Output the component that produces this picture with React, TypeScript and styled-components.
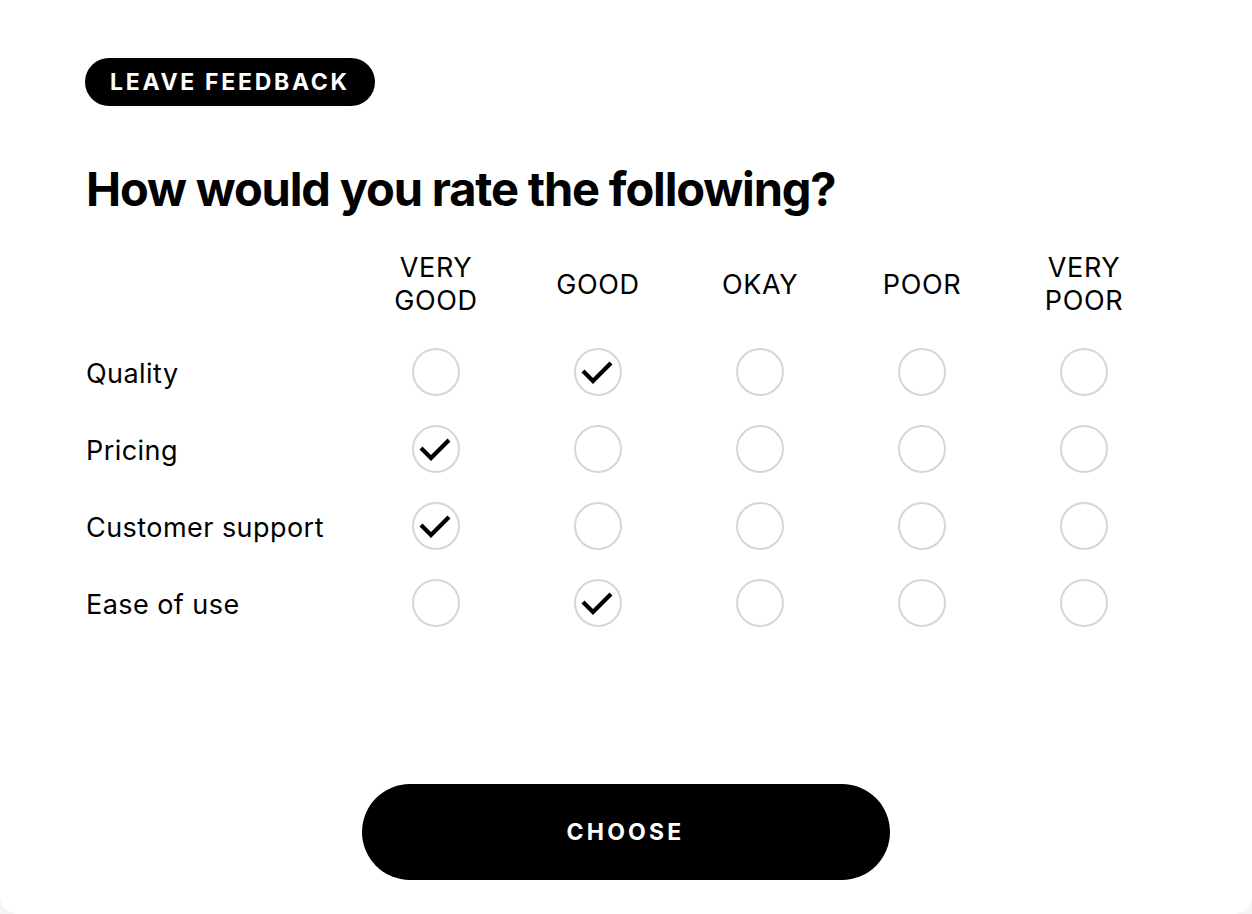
import React from "react";
import styled, { createGlobalStyle } from "styled-components";

const GlobalStyle = createGlobalStyle`
  html, body {
    margin: 0;
    padding: 0;
    background: #f4f4f4;
  }
  body {
    font-family: Inter, "Noto Sans", "Liberation Sans", sans-serif;
    color: #000;
  }
`;

const Card = styled.div`
  box-sizing: border-box;
  width: 1252px;
  height: 914px;
  background: #fff;
  border-radius: 0 0 18px 18px;
  padding: 58px 86px 0 85px;
  display: flex;
  flex-direction: column;
`;

const Badge = styled.div`
  align-self: flex-start;
  height: 48px;
  padding: 0 25px 0 25px;
  border-radius: 24px;
  background: #000;
  color: #fff;
  font-size: 23px;
  font-weight: 700;
  letter-spacing: 2.7px;
  display: flex;
  align-items: center;
`;

const Title = styled.h1`
  margin: 54px 0 0 1px;
  font-size: 47px;
  font-weight: 700;
  letter-spacing: -1.15px;
  line-height: 58px;
`;

const Grid = styled.div`
  margin-top: 33px;
  margin-left: 1px;
  display: grid;
  grid-template-columns: 269px repeat(5, 162px);
  grid-template-rows: 84px;
  grid-auto-rows: 77px;
`;

const HeadCell = styled.div`
  align-self: start;
  height: 66px;
  display: flex;
  align-items: center;
  justify-content: center;
  text-align: center;
  font-size: 27px;
  line-height: 33px;
  font-weight: 400;
  letter-spacing: 0.6px;
`;

const HeadRow = styled.div`
  display: contents;
`;

const Label = styled.div`
  display: flex;
  align-items: center;
  font-size: 27px;
  letter-spacing: 0.45px;
`;

const Cell = styled.div`
  display: flex;
  align-items: center;
  justify-content: center;
  padding-bottom: 4px;
`;

const Radio = styled.button<{ $checked: boolean }>`
  box-sizing: border-box;
  width: 48px;
  height: 48px;
  border-radius: 50%;
  border: 2px solid #d6d6d6;
  background: #fff;
  padding: 0;
  display: flex;
  align-items: center;
  justify-content: center;
  cursor: pointer;

  svg {
    display: block;
  }
`;

const Footer = styled.div`
  margin-top: auto;
  margin-bottom: 34px;
  display: flex;
  justify-content: center;
`;

const ChooseButton = styled.button`
  width: 528px;
  height: 96px;
  border: none;
  border-radius: 48px;
  background: #000;
  color: #fff;
  font-family: Inter, "Noto Sans", "Liberation Sans", sans-serif;
  font-size: 23px;
  font-weight: 700;
  letter-spacing: 3.2px;
  cursor: pointer;
`;

const columns = [["VERY", "GOOD"], ["GOOD"], ["OKAY"], ["POOR"], ["VERY", "POOR"]];

const rows = [
  { label: "Quality", value: 1 },
  { label: "Pricing", value: 0 },
  { label: "Customer support", value: 0 },
  { label: "Ease of use", value: 1 },
];

const Check = () => (
  <svg width="44" height="44" viewBox="0 0 44 44" fill="none">
    <path
      d="M8.5 22.5 L17 31 L33.5 14.5"
      stroke="#000"
      strokeWidth="4.2"
      strokeLinecap="square"
      strokeLinejoin="miter"
    />
  </svg>
);

export default function App() {
  const [answers, setAnswers] = React.useState(rows.map((r) => r.value));

  return (
    <>
      <GlobalStyle />
      <Card>
        <Badge>LEAVE FEEDBACK</Badge>
        <Title>How would you rate the following?</Title>
        <Grid>
          <HeadRow>
            <HeadCell />
            {columns.map((c, i) => (
              <HeadCell key={i}>
                {c.map((line, j) => (
                  <React.Fragment key={j}>
                    {j > 0 && <br />}
                    {line}
                  </React.Fragment>
                ))}
              </HeadCell>
            ))}
          </HeadRow>
          {rows.map((row, r) => (
            <React.Fragment key={row.label}>
              <Label>{row.label}</Label>
              {columns.map((_, c) => (
                <Cell key={c}>
                  <Radio
                    $checked={answers[r] === c}
                    aria-label={`${row.label} ${columns[c].join(" ")}`}
                    onClick={() =>
                      setAnswers((a) => a.map((v, i) => (i === r ? c : v)))
                    }
                  >
                    {answers[r] === c && <Check />}
                  </Radio>
                </Cell>
              ))}
            </React.Fragment>
          ))}
        </Grid>
        <Footer>
          <ChooseButton>CHOOSE</ChooseButton>
        </Footer>
      </Card>
    </>
  );
}
